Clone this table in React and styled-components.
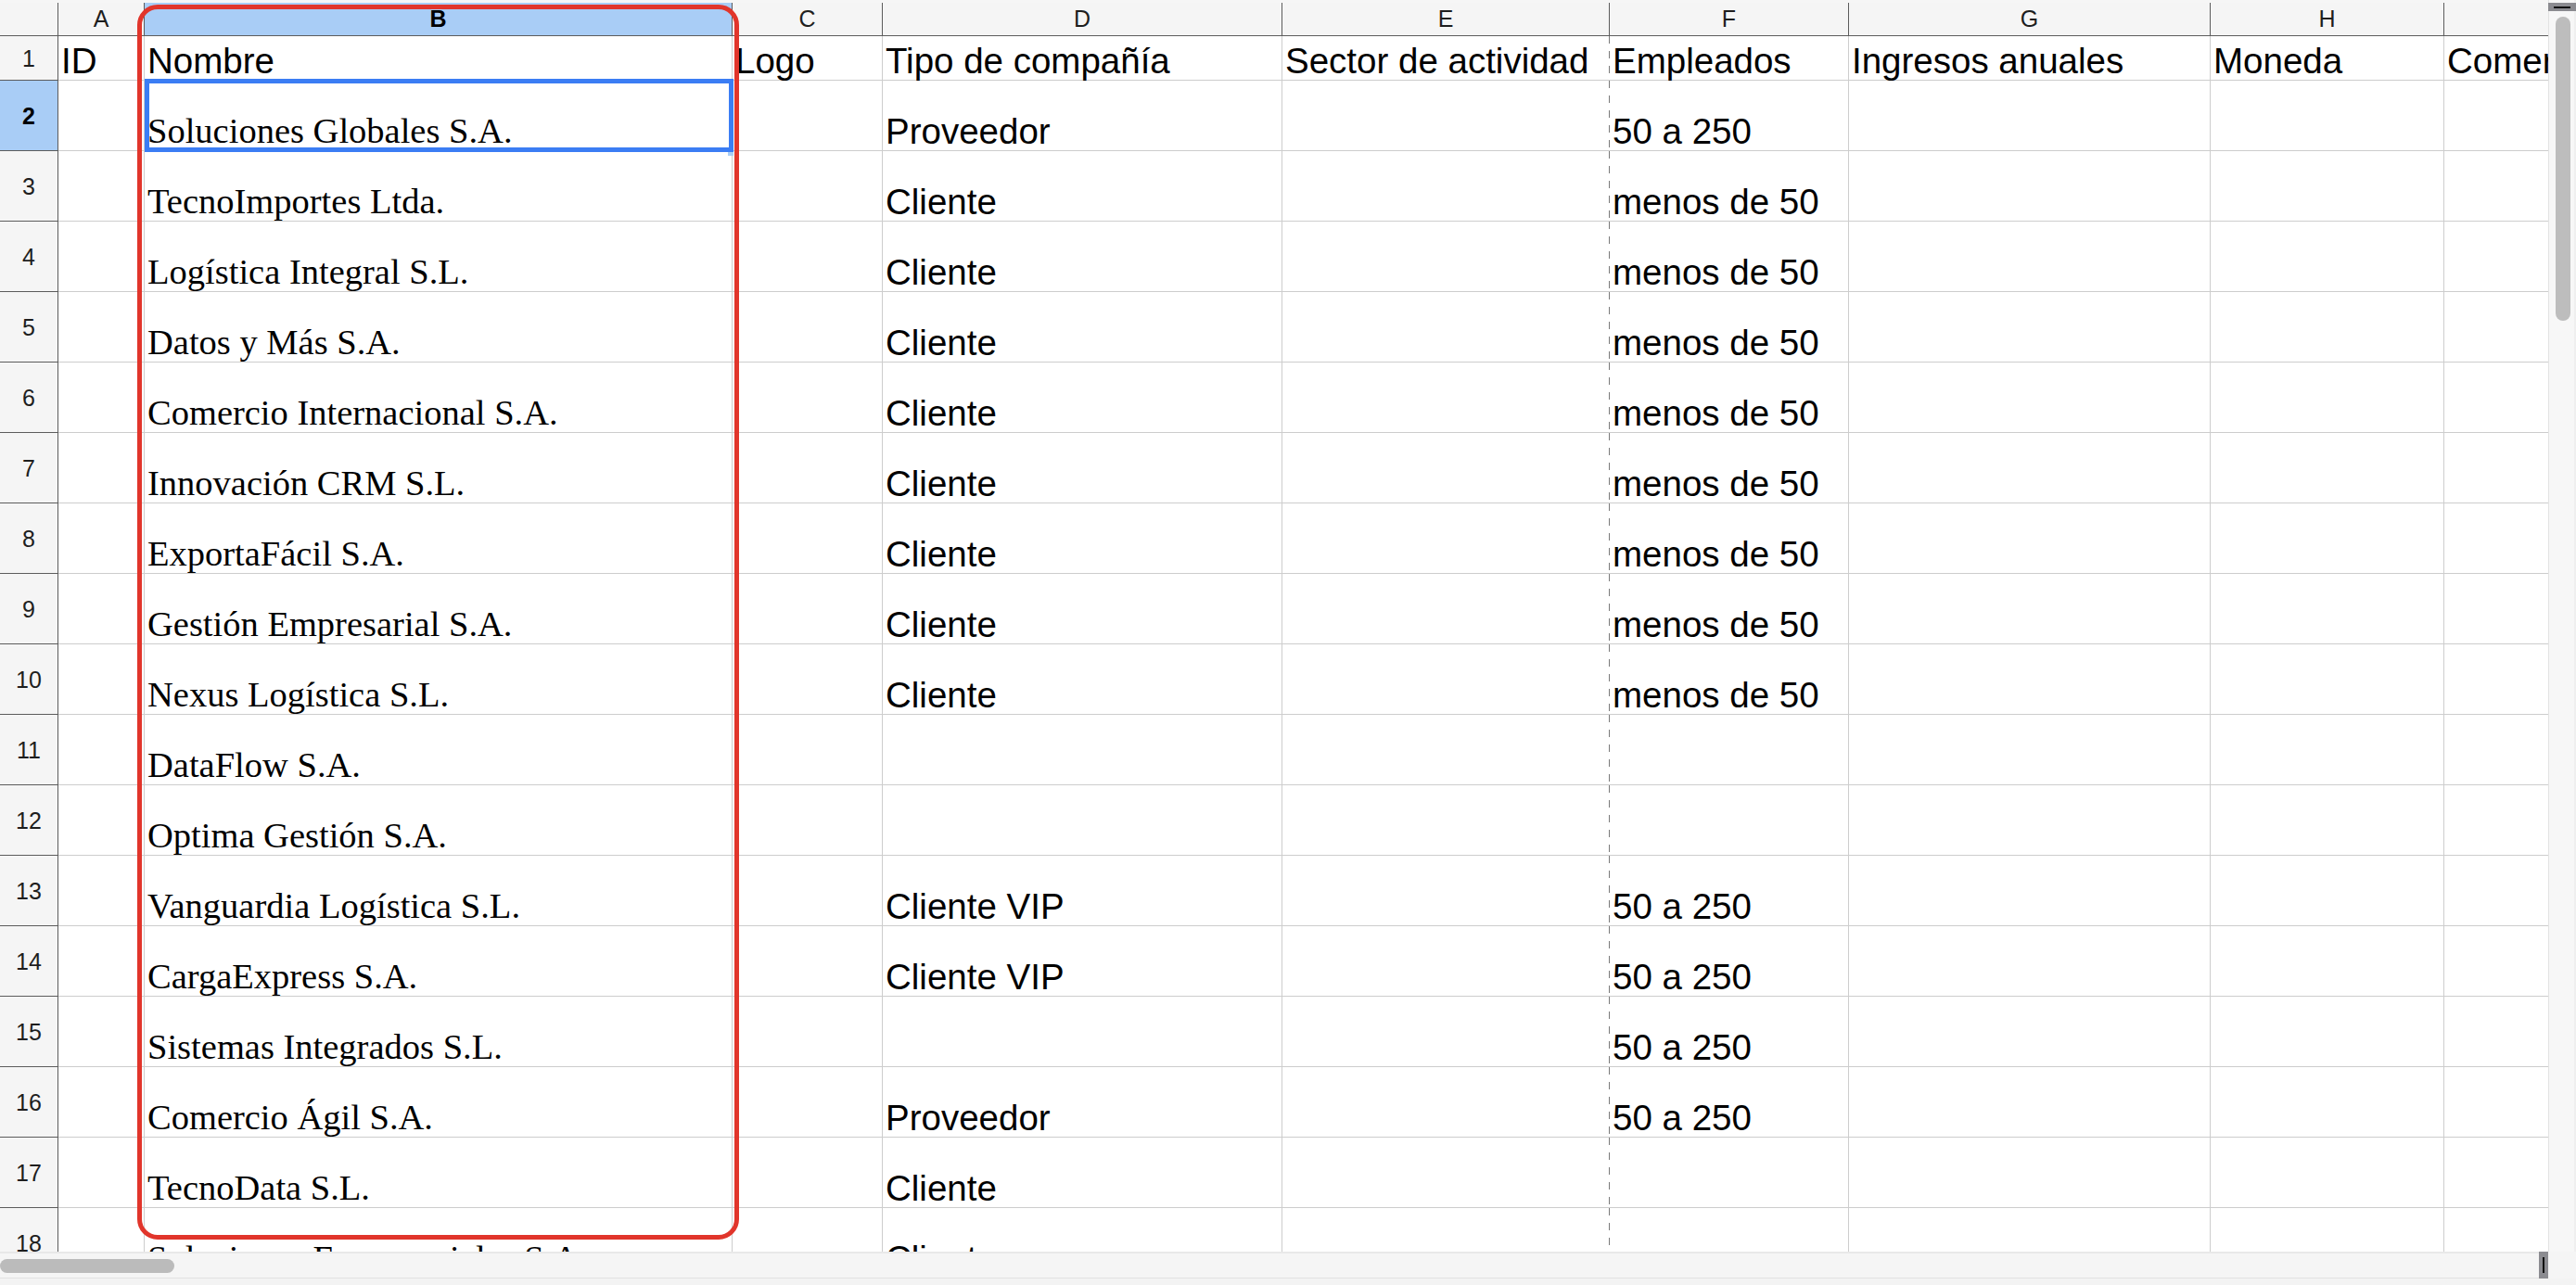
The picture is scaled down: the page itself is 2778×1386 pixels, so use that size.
import React from "react";
import styled, { createGlobalStyle, css } from "styled-components";

const COLUMNS = [
  { key: "A", width: 93 },
  { key: "B", width: 634 },
  { key: "C", width: 162 },
  { key: "D", width: 431 },
  { key: "E", width: 353 },
  { key: "F", width: 258 },
  { key: "G", width: 390 },
  { key: "H", width: 252 },
  { key: "I", width: 400 },
];

const HEADERS = [
  "ID",
  "Nombre",
  "Logo",
  "Tipo de compañía",
  "Sector de actividad",
  "Empleados",
  "Ingresos anuales",
  "Moneda",
  "Comercial",
];

// nombre, tipo, empleados
const COMPANIES = [
  ["Soluciones Globales S.A.", "Proveedor", "50 a 250"],
  ["TecnoImportes Ltda.", "Cliente", "menos de 50"],
  ["Logística Integral S.L.", "Cliente", "menos de 50"],
  ["Datos y Más S.A.", "Cliente", "menos de 50"],
  ["Comercio Internacional S.A.", "Cliente", "menos de 50"],
  ["Innovación CRM S.L.", "Cliente", "menos de 50"],
  ["ExportaFácil S.A.", "Cliente", "menos de 50"],
  ["Gestión Empresarial S.A.", "Cliente", "menos de 50"],
  ["Nexus Logística S.L.", "Cliente", "menos de 50"],
  ["DataFlow S.A.", "", ""],
  ["Optima Gestión S.A.", "", ""],
  ["Vanguardia Logística S.L.", "Cliente VIP", "50 a 250"],
  ["CargaExpress S.A.", "Cliente VIP", "50 a 250"],
  ["Sistemas Integrados S.L.", "", "50 a 250"],
  ["Comercio Ágil S.A.", "Proveedor", "50 a 250"],
  ["TecnoData S.L.", "Cliente", ""],
  ["Soluciones Empresariales S.A.", "Cliente", ""],
];

const GlobalStyle = createGlobalStyle`
  html, body {
    margin: 0;
    padding: 0;
    background: #fff;
    overflow: hidden;
  }
  body {
    font-family: "Liberation Sans", Arial, sans-serif;
  }
`;

const App = () => {
  const rows = [HEADERS, ...COMPANIES.map(([name, tipo, emp]) => ["", name, "", tipo, "", emp, "", "", ""])];

  return (
    <>
      <GlobalStyle />
      <StWindow>
        <StMain>
          <StViewport>
            <StSheet>
              <StCorner />
              {COLUMNS.map((col) => (
                <StColHead key={col.key} $selected={col.key === "B"}>
                  {col.key}
                </StColHead>
              ))}
              {rows.map((row, r) => {
                const num = r + 1;
                return (
                  <React.Fragment key={`row${num}`}>
                    <StRowHead $selected={num === 2}>{num}</StRowHead>
                    {row.map((value, c) => (
                      <StCell
                        key={`c${num}-${c}`}
                        $serif={c === 1 && num > 1}
                        $pageBreak={c === 4}
                        $active={c === 1 && num === 2}
                      >
                        {value}
                      </StCell>
                    ))}
                  </React.Fragment>
                );
              })}
            </StSheet>
            <StAnnotation />
          </StViewport>
          <StVScroll>
            <StVEnd>
              <StEndMark />
            </StVEnd>
            <StVThumb />
          </StVScroll>
        </StMain>
        <StBottom>
          <StHScroll>
            <StHThumb />
            <StHEnd>
              <StEndMarkV />
            </StHEnd>
          </StHScroll>
          <StScrollCorner />
        </StBottom>
        <StStatusStrip />
      </StWindow>
    </>
  );
};

export default App;

const StWindow = styled.div`
  width: 2778px;
  height: 1386px;
  display: flex;
  flex-direction: column;
  overflow: hidden;
  background: #fff;
`;

const StMain = styled.div`
  display: flex;
  height: 1350px;
`;

const StViewport = styled.div`
  position: relative;
  flex: 1;
  overflow: hidden;
`;

const StSheet = styled.div`
  display: grid;
  grid-template-columns: 63px ${COLUMNS.map((c) => `${c.width}px`).join(" ")};
  grid-template-rows: 36px 48px repeat(${COMPANIES.length}, 76px);
  padding-top: 3px;
  background: #f6f6f6;
  width: max-content;
`;

const headBase = css`
  box-sizing: border-box;
  background: #f5f5f5;
  border-right: 1px solid #5c5c5c;
  border-bottom: 1px solid #5c5c5c;
  display: flex;
  align-items: center;
  justify-content: center;
  font-family: "Liberation Sans", Arial, sans-serif;
  font-size: 25px;
  color: #1e1e1e;
`;

const StCorner = styled.div`
  ${headBase};
`;

const StColHead = styled.div`
  ${headBase};
  ${({ $selected }) =>
    $selected &&
    css`
      background: #a9cdf6;
      font-weight: bold;
      color: #000;
    `}
`;

const StRowHead = styled.div`
  ${headBase};
  padding-top: 2px;
  ${({ $selected }) =>
    $selected &&
    css`
      background: #a9cdf6;
      font-weight: bold;
      color: #000;
    `}
`;

const StCell = styled.div`
  box-sizing: border-box;
  position: relative;
  background: #fff;
  border-right: 1px solid #cdcdcd;
  border-bottom: 1px solid #cdcdcd;
  display: flex;
  align-items: flex-end;
  padding: 0 3px;
  white-space: nowrap;
  font-family: ${({ $serif }) =>
    $serif ? `"Liberation Serif", "Times New Roman", serif` : `"Liberation Sans", Arial, sans-serif`};
  font-size: 38.5px;
  line-height: 1.07;
  color: #000;

  ${({ $pageBreak }) =>
    $pageBreak &&
    css`
      border-right: none;
      padding-right: 4px;
      background-image: linear-gradient(to bottom, #7a7a7a 50%, transparent 50%);
      background-size: 1px 16px;
      background-repeat: repeat-y;
      background-position: right top;
    `}

  ${({ $active }) =>
    $active &&
    css`
      &::after {
        content: "";
        position: absolute;
        top: -2px;
        left: 0;
        right: -2px;
        bottom: -2px;
        border: 5px solid #3b7df4;
        z-index: 2;
        pointer-events: none;
      }
      &::before {
        content: "";
        position: absolute;
        right: -2px;
        bottom: -6px;
        width: 6px;
        height: 5px;
        background: #a9cdf6;
        z-index: 2;
      }
    `}
`;

const StAnnotation = styled.div`
  position: absolute;
  left: 148px;
  top: 5px;
  width: 649px;
  height: 1332px;
  box-sizing: border-box;
  border: 5px solid #e1352b;
  border-radius: 22px;
  pointer-events: none;
  z-index: 5;
`;

const StVScroll = styled.div`
  width: 30px;
  box-sizing: border-box;
  background: #f7f7f7;
  border-left: 1px solid #e2e2e2;
  border-right: 2px solid #efefef;
  display: flex;
  flex-direction: column;
  padding-top: 3px;
`;

const StVEnd = styled.div`
  height: 9px;
  background: #8b8b90;
  display: flex;
  align-items: center;
  justify-content: center;
  margin-left: -1px;
  margin-right: -2px;
`;

const StEndMark = styled.div`
  width: 18px;
  height: 2px;
  background: #111;
`;

const StVThumb = styled.div`
  margin: 6px 0 0 7px;
  width: 16px;
  height: 328px;
  border-radius: 8px;
  background: #bdbdbd;
`;

const StBottom = styled.div`
  display: flex;
  height: 29px;
`;

const StHScroll = styled.div`
  flex: 1;
  box-sizing: border-box;
  display: flex;
  justify-content: space-between;
  background: #f5f5f5;
  border-top: 2px solid #e8e8e8;
  border-bottom: 1px solid #e2e2e2;
`;

const StHThumb = styled.div`
  margin-top: 6px;
  width: 188px;
  height: 15px;
  border-radius: 8px;
  background: #bbbbbb;
`;

const StHEnd = styled.div`
  width: 10px;
  margin-top: -2px;
  margin-bottom: -1px;
  background: #8b8b90;
  display: flex;
  align-items: center;
  justify-content: center;
`;

const StEndMarkV = styled.div`
  width: 2px;
  height: 17px;
  background: #111;
`;

const StScrollCorner = styled.div`
  width: 30px;
  background: #f5f5f5;
`;

const StStatusStrip = styled.div`
  height: 7px;
  background: #f3f3f3;
`;
